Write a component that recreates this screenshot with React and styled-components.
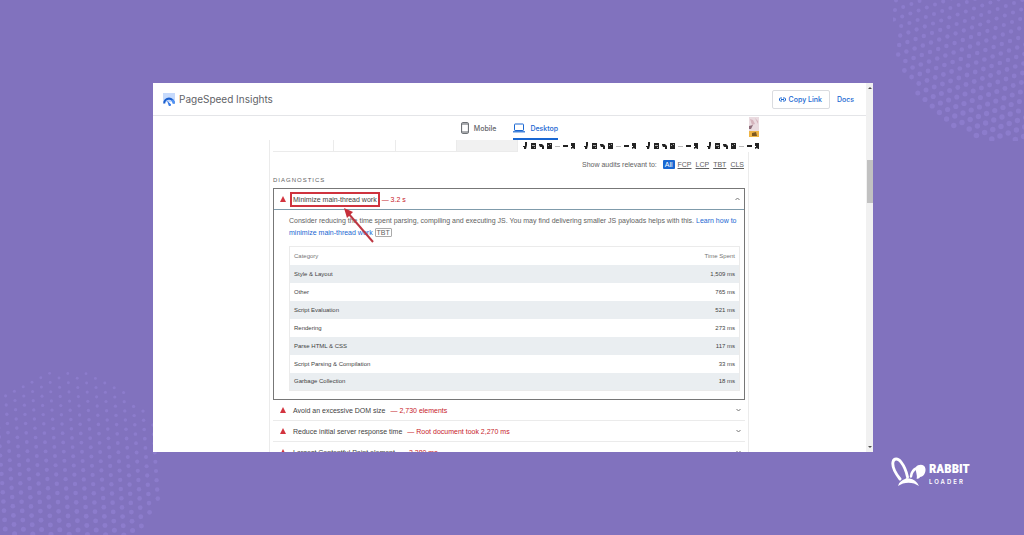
import React, { useState } from 'react';
import styled, { createGlobalStyle } from 'styled-components';

const categories = [
    { name: 'Style & Layout', time: '1,509 ms' },
    { name: 'Other', time: '765 ms' },
    { name: 'Script Evaluation', time: '521 ms' },
    { name: 'Rendering', time: '273 ms' },
    { name: 'Parse HTML & CSS', time: '117 ms' },
    { name: 'Script Parsing & Compilation', time: '33 ms' },
    { name: 'Garbage Collection', time: '18 ms' },
];

const audits = [
    { title: 'Avoid an excessive DOM size', value: '2,730 elements' },
    { title: 'Reduce initial server response time', value: 'Root document took 2,270 ms' },
    { title: 'Largest Contentful Paint element', value: '3,380 ms' },
];

const metrics = ['All', 'FCP', 'LCP', 'TBT', 'CLS'];

// dots on a slanted lattice, clipped to a circle, growing towards the bottom
const makeDots = (r, a, b) => {
    const dots = [];
    for (let i = -30; i <= 30; i++) {
        for (let j = -30; j <= 30; j++) {
            const x = i * a[0] + j * b[0];
            const y = i * a[1] + j * b[1];
            if (x * x + y * y < r * r) {
                dots.push({ x: x + r, y: y + r, size: 1.4 + ((y + r) / (2 * r)) * 1.4 });
            }
        }
    }
    return dots;
};

const DotCircle = ({ r, a, b }) => (
    <svg width={r * 2} height={r * 2} aria-hidden="true">
        {makeDots(r, a, b).map((d, i) => (
            <circle key={i} cx={d.x} cy={d.y} r={d.size} fill="#8c7ccc" />
        ))}
    </svg>
);

const GaugeIcon = () => (
    <svg width="12" height="13" viewBox="0 0 12 13" aria-hidden="true">
        <rect x="0" y="0" width="12" height="9" fill="#c6dafc" />
        <path d="M1.2 10.5a4.8 4.8 0 0 1 9.6 0" fill="none" stroke="#1a5fce" strokeWidth="2.2" />
        <path d="M9.2 7a4.8 4.8 0 0 1 1.6 3.5" fill="none" stroke="#4f93f5" strokeWidth="2.2" />
        <path d="M4 7.5l3.4 3.2a1.3 1.3 0 1 1-2 1z" fill="#3b7de8" />
    </svg>
);

const LinkIcon = () => (
    <svg width="7" height="5" viewBox="0 0 7 5" fill="none" stroke="#1967d2" aria-hidden="true">
        <path d="M3 1H1.5a1 1 0 0 0-1 1v1a1 1 0 0 0 1 1H3M4 1h1.5a1 1 0 0 1 1 1v1a1 1 0 0 1-1 1H4M2 2.5h3" />
    </svg>
);

const PhoneIcon = () => (
    <svg width="8" height="12" viewBox="0 0 8 12" fill="none" stroke="#5f6368" aria-hidden="true">
        <rect x=".6" y=".6" width="6.8" height="10.8" rx="1" />
        <path d="M.6 2h6.8M.6 10h6.8" />
    </svg>
);

const LaptopIcon = () => (
    <svg width="12" height="10" viewBox="0 0 12 10" fill="none" stroke="#1967d2" aria-hidden="true">
        <rect x="1.5" y="1" width="9" height="6.5" rx=".6" />
        <path d="M0 8.8h12" strokeWidth="1.2" />
    </svg>
);

const Chevron = ({ up }) => (
    <svg width="5" height="4" viewBox="0 0 5 4" fill="none" stroke="#777" aria-hidden="true">
        <path d={up ? 'M.5 3l2-2 2 2' : 'M.5 1l2 2 2-2'} />
    </svg>
);

const FilmFrame = () => (
    <svg width="55" height="8" viewBox="0 0 55 8" fill="#222" aria-hidden="true">
        <path d="M3 0h2v3l-1 4H2V5H1V4h2z" />
        <path d="M9 1h5v6H9z" />
        <path d="M17 3V2h3l2 2v3h-2V5h-2z" />
        <path d="M25 1h5v6h-5z" />
        <path d="M26 3h1v1h-1zM10 3h3v1h-3zM12 5h1v1h-1zM28 2h1v1h-1z" fill="#aaa" />
        <path d="M33 4h5v1h-5z" fill="#bbb" />
        <path d="M41 3h5v2h-5z" />
        <path d="M49 1h4v6h-1L51 6l-2 1V5h1V4h-1z" />
    </svg>
);

const RabbitIcon = () => (
    <svg width="36" height="30" viewBox="0 0 36 30" aria-hidden="true">
        <path
            d="M9 22C5 17 1 10 2 5c.8-4 5-4 8 0 3.500 4.500 5.500 10 6.500 15"
            fill="none"
            stroke="#fff"
            strokeWidth="2.9"
            strokeLinecap="round"
        />
        <path d="M20 19.5c.3-4 2.500-7 6-8.500" fill="none" stroke="#fff" strokeWidth="2.5" strokeLinecap="round" />
        <path d="M25 10c2-3 9-3.500 9.500 2 .3 4-2 8-5.500 8-.5 1.500-2 2-3.500 1.500 1.500-2-1.500-8-.5-11.500z" fill="#fff" />
        <path d="M7 29c1-4 4-6 7-7l1.500-1 3 .5c4 .5 7.500 3 9.500 7.500-6-4.500-15-4.500-21 0z" fill="#fff" />
    </svg>
);

const App = () => {
    const [device, setDevice] = useState('Desktop');
    const [metric, setMetric] = useState('All');

    return (
        <Page>
            <GlobalStyle />
            <TopDots>
                <DotCircle r={119} a={[8.2, -3]} b={[-1, 9.5]} />
            </TopDots>
            <BottomDots>
                <DotCircle r={99} a={[8.8, -4.5]} b={[0.6, 9.2]} />
            </BottomDots>
            <Window>
                <Main>
                    <Header>
                        <Brand>
                            <GaugeIcon />
                            PageSpeed Insights
                        </Brand>
                        <CopyButton>
                            <LinkIcon />
                            Copy Link
                        </CopyButton>
                        <DocsLink href="#docs">Docs</DocsLink>
                    </Header>
                    <Tabs>
                        <Tab $active={device === 'Mobile'} onClick={() => setDevice('Mobile')}>
                            <PhoneIcon />
                            Mobile
                        </Tab>
                        <Tab $active={device === 'Desktop'} onClick={() => setDevice('Desktop')}>
                            <LaptopIcon />
                            Desktop
                        </Tab>
                        <Thumb>
                            <svg width="10" height="21" viewBox="0 0 10 21" aria-hidden="true">
                                <path d="M0 0h10v14H0z" fill="#eadbe0" />
                                <path d="M1 2l3 1 2 4-3 1zM6 1l3 3v3z" fill="#d5b4bd" />
                                <path d="M0 9l4-1-2 4H0z" fill="#8d6b78" />
                                <path d="M0 14h10v6H0z" fill="#eeb445" />
                                <path d="M3 16l4-1 1 4H3z" fill="#7d5820" />
                            </svg>
                        </Thumb>
                    </Tabs>
                    <Report>
                        <Filmstrip>
                            <EmptyFrame />
                            <EmptyFrame />
                            <EmptyFrame />
                            <EmptyFrame $filled />
                            <Frame><FilmFrame /></Frame>
                            <Frame><FilmFrame /></Frame>
                            <Frame><FilmFrame /></Frame>
                            <Frame><FilmFrame /></Frame>
                        </Filmstrip>
                        <Filter>
                            <FilterLabel>Show audits relevant to:</FilterLabel>
                            {metrics.map((m) => (
                                <Metric key={m} $active={m === metric} onClick={() => setMetric(m)}>
                                    {m}
                                </Metric>
                            ))}
                        </Filter>
                        <GroupTitle>DIAGNOSTICS</GroupTitle>
                        <OpenAudit>
                            <AuditHeader $open>
                                <Triangle />
                                <Marked>
                                    Minimize main-thread work
                                    <Arrow width="32" height="38" viewBox="0 0 32 38" aria-hidden="true">
                                        <path d="M4 6l25 29" stroke="#bd3742" strokeWidth="2" />
                                        <path d="M0 1l9 4-6 6z" fill="#c62f3a" />
                                    </Arrow>
                                </Marked>
                                <Value>— 3.2 s</Value>
                                <Chevron up />
                            </AuditHeader>
                            <Description>
                                Consider reducing the time spent parsing, compiling and executing JS. You may find
                                delivering smaller JS payloads helps with this.{' '}
                                <a href="#learn">Learn how to minimize main-thread work</a> <Tag>TBT</Tag>
                            </Description>
                            <Table>
                                <thead>
                                    <tr>
                                        <th>Category</th>
                                        <th>Time Spent</th>
                                    </tr>
                                </thead>
                                <tbody>
                                    {categories.map((c) => (
                                        <tr key={c.name}>
                                            <td>{c.name}</td>
                                            <td>{c.time}</td>
                                        </tr>
                                    ))}
                                </tbody>
                            </Table>
                        </OpenAudit>
                        {audits.map((a) => (
                            <AuditHeader key={a.title}>
                                <Triangle />
                                <Title>{a.title}</Title>
                                <Value>— {a.value}</Value>
                                <Chevron />
                            </AuditHeader>
                        ))}
                    </Report>
                </Main>
                <Scrollbar>
                    <ScrollArrow />
                    <ScrollThumb />
                    <ScrollArrow $down />
                </Scrollbar>
            </Window>
            <Footer>
                <RabbitIcon />
                <Logo>
                    <LogoName>RABBIT</LogoName>
                    <LogoSub>LOADER</LogoSub>
                </Logo>
            </Footer>
        </Page>
    );
};

export default App;

const GlobalStyle = createGlobalStyle`
* { box-sizing: border-box; }
body {
    margin: 0;
    font-family: "Liberation Sans", Arial, sans-serif;
    font-size: 7px;
    color: #424242;
}
button {
    margin: 0;
    padding: 0;
    border: 0;
    background: none;
    font: inherit;
    color: inherit;
}
svg {
    display: block;
    flex: none;
}
a {
    color: #1967d2;
    text-decoration: none;
}
`;
const Page = styled.div`
position: relative;
display: flex;
flex-direction: column;
height: 100vh;
padding: 83px 151px 0 153px;
overflow: hidden;
background: #8172be;
`;
const TopDots = styled.div`
position: absolute;
top: -97px;
right: -107px;
`;
const BottomDots = styled.div`
position: absolute;
left: -34px;
bottom: -34px;
`;
const Window = styled.div`
position: relative;
display: flex;
flex: 1;
min-height: 0;
overflow: hidden;
background: #fff;
`;
const Main = styled.div`
flex: 1;
min-width: 0;
`;
const Header = styled.header`
display: flex;
align-items: center;
height: 33px;
padding: 0 12px 0 10px;
border-bottom: 1px solid #e4e5e8;
font-family: Inter, sans-serif;
`;
const Brand = styled.div`
display: flex;
align-items: center;
gap: 4px;
margin-right: auto;
font-size: 10px;
color: #5f6368;
`;
const CopyButton = styled.button`
display: flex;
align-items: center;
gap: 3px;
height: 19px;
padding: 0 7px 0 6px;
border: 1px solid #dadce0;
border-radius: 2px;
font-size: 7px;
font-weight: 500;
color: #1967d2;
`;
const DocsLink = styled.a`
margin-left: 7px;
font-size: 7px;
font-weight: 500;
`;
const Tabs = styled.div`
position: relative;
display: flex;
justify-content: center;
gap: 17px;
height: 24px;
font-family: Inter, sans-serif;
font-weight: 500;
`;
const Tab = styled.button`
display: flex;
align-items: center;
gap: 5px;
padding-top: 2px;
border-bottom: 2px solid ${(p) => (p.$active ? '#1967d2' : 'transparent')};
color: ${(p) => (p.$active ? '#1967d2' : '#5f6368')};
`;
const Thumb = styled.div`
position: absolute;
top: 1px;
right: 107px;
`;
const Report = styled.div`
margin: 0 117px 0 116px;
padding: 0 3px;
border: solid #ebebeb;
border-width: 0 1px;
`;
const Filmstrip = styled.div`
display: grid;
grid-template-columns: repeat(8, minmax(0, 1fr));
height: 12px;
margin-right: -18px;
`;
const EmptyFrame = styled.div`
border: solid #ebebeb;
border-width: 0 1px 1px 0;
background: ${(p) => (p.$filled ? '#f1f1f1' : '#fff')};
`;
const Frame = styled.div`
padding: 2px 0 0 4px;
background: #fff;
`;
const Filter = styled.div`
display: flex;
align-items: center;
justify-content: flex-end;
gap: 2px;
height: 24px;
color: #616161;
`;
const FilterLabel = styled.span`
margin-right: 4px;
`;
const Metric = styled.button`
padding: 0 ${(p) => (p.$active ? '2px' : '1px')};
border-radius: 1px;
line-height: 9px;
background: ${(p) => (p.$active ? '#1967d2' : 'none')};
color: ${(p) => (p.$active ? '#fff' : '#616161')};
text-decoration: ${(p) => (p.$active ? 'none' : 'underline')};
`;
const GroupTitle = styled.h2`
margin: 0;
font-size: 6px;
font-weight: 400;
line-height: 8px;
letter-spacing: 1px;
padding-bottom: 4px;
color: #616161;
`;
const OpenAudit = styled.section`
border: 1px solid #777;
padding-bottom: 8px;
`;
const AuditHeader = styled.button`
display: flex;
align-items: center;
gap: 5px;
width: 100%;
height: 21px;
padding: 0 4px 0 ${(p) => (p.$open ? '6px' : '7px')};
border-bottom: 1px solid ${(p) => (p.$open ? '#7f9bab' : '#ebebeb')};
text-align: left;

svg:last-child {
    margin-left: auto;
}
`;
const Triangle = styled.span`
border: 3px solid transparent;
border-top: 0;
border-bottom: 6px solid #d3343f;
`;
const Title = styled.span`
margin-left: 2px;
`;
const Marked = styled.span`
position: relative;
margin: 0 -3px 0 -1px;
padding: 0 1px;
border: 2px solid #cf333e;
line-height: 11px;
`;
const Arrow = styled.svg`
position: absolute;
top: 13px;
left: 52px;
`;
const Value = styled.span`
color: #c7222a;
`;
const Description = styled.p`
margin: 0;
padding: 5px 4px 0 15px;
line-height: 12px;
color: #616161;
`;
const Tag = styled.span`
padding: 0 1px;
border: 1px solid #aaa;
border-radius: 1px;
`;
const Table = styled.table`
width: calc(100% - 19px);
margin: 7px 4px 0 15px;
border: 1px solid #ebebeb;
border-collapse: collapse;
font-size: 6px;

th, td {
    height: 18px;
    padding: 0 4px;
    text-align: left;
}
th {
    font-weight: 400;
    color: #757575;
}
th:last-child, td:last-child {
    text-align: right;
}
tbody tr:nth-child(odd) {
    background: #eaeef1;
}
`;
const Scrollbar = styled.div`
display: flex;
flex-direction: column;
align-items: center;
width: 7px;
padding: 4px 0;
background: #f1f1f1;
`;
const ScrollArrow = styled.span`
margin-top: ${(p) => (p.$down ? 'auto' : '0')};
border: 2px solid transparent;
border-top: ${(p) => (p.$down ? '2px solid #505050' : '0')};
border-bottom: ${(p) => (p.$down ? '0' : '2px solid #505050')};
`;
const ScrollThumb = styled.div`
width: 6px;
height: 43px;
margin-top: 71px;
background: #c1c1c1;
`;
const Footer = styled.footer`
position: relative;
display: flex;
justify-content: flex-end;
gap: 2px;
height: 83px;
margin-right: -96px;
padding-top: 5px;
color: #fff;
`;
const Logo = styled.div`
display: flex;
flex-direction: column;
width: 40px;
padding-top: 4px;
`;
const LogoName = styled.span`
font: 900 13px/16px "Roboto Condensed", Roboto, sans-serif;
`;
const LogoSub = styled.span`
font: 600 6px/10px Inter, sans-serif;
letter-spacing: 2px;
`;
